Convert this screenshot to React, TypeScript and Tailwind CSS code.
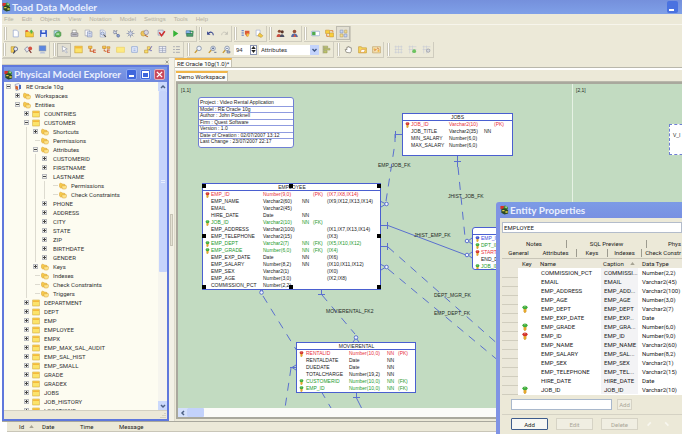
import React, { useState } from "react";

/* ---------- icons ---------- */

const page = <path d="M4 2h6l3 3v9H4z" fill="#fff" stroke="#7c93c8" />;
const yellowBox = (
  <>
    <rect x="1.5" y="2" width="13" height="12" fill="#fbe36b" stroke="#c99b25" />
    <path d="M2 4.5h12" stroke="#f5b93c" strokeWidth="3" />
  </>
);
const lens = <circle cx="9" cy="6" r="4" fill="#eef3fb" stroke="#7d8ba5" strokeWidth="1.4" />;
const handle = <path d="M6 9l-4.5 5" stroke="#c99a35" strokeWidth="2.4" />;

const GLYPHS: Record<string, React.ReactNode> = {
  new: page,
  open: (
    <>
      <path d="M1 4h5l2 2h7v8H1z" fill="#f7cf3d" stroke="#c0912a" />
      <path d="M8 5l3-4 4 4h-2v3h-3V5z" fill="#58b544" />
      <path d="M1 2h4v3H1z" fill="#e2543a" />
    </>
  ),
  save: (
    <>
      <path d="M2 2h12v12H2z" fill="#2f55c8" />
      <path d="M5 2h6v4H5zM4 9h8v5H4z" fill="#e9effc" />
    </>
  ),
  database: (
    <>
      <path d="M2 3h9v10H2z" fill="#b7d8ef" stroke="#4b8a63" />
      <path d="M4 9c3-5 7-5 10-3v6c-3 3-7 3-10 0z" fill="#5fb95a" stroke="#3c7c3a" />
      <path d="M6 9h5" stroke="#fff" strokeWidth="1.5" />
    </>
  ),
  print: (
    <>
      <path d="M4 2h7v5H4z" fill="#fff" stroke="#777" />
      <path d="M2 7h12v6H2z" fill="#c9c7d2" stroke="#6d6b78" />
      <path d="M4 10h8" stroke="#555" />
    </>
  ),
  copy: (
    <>
      <path d="M2 2h8v10H2z" fill="#fff" stroke="#8b8fa5" />
      <path d="M6 5h8v9H6z" fill="#dfe6f7" stroke="#6c7cab" />
      <path d="M8 8h4M8 11h4" stroke="#6c7cab" />
    </>
  ),
  preview: (
    <>
      {page}
      <circle cx="8" cy="8" r="3" fill="#cfdcf4" stroke="#5d6d95" />
      <path d="M10 10l4 4" stroke="#555" strokeWidth="2" />
    </>
  ),
  cut: (
    <>
      <path d="M3 2l8 10M9 2L4 9" stroke="#70778f" strokeWidth="1.6" />
      <circle cx="11" cy="12" r="2.5" fill="#8ea0d0" stroke="#4b5c93" />
      <circle cx="5" cy="6" r="2.5" fill="#d7dbe8" stroke="#6b7390" />
    </>
  ),
  gear: (
    <>
      <path d="M8 1v14M1 8h14M3 3l10 10M13 3L3 13" stroke="#9ba3b5" strokeWidth="1.6" />
      <circle cx="8" cy="8" r="3.4" fill="#cdd5ea" stroke="#77819c" />
    </>
  ),
  gearGold: (
    <>
      <circle cx="6" cy="8" r="4.5" fill="#efc65b" stroke="#b58b32" />
      <circle cx="11" cy="6" r="4" fill="#d9d6df" stroke="#77708c" />
      <path d="M9 11l5 3" stroke="#b76a32" strokeWidth="2" />
    </>
  ),
  check: (
    <>
      <path d="M2 2h9v9H2z" fill="#dfe2ee" stroke="#8088a5" />
      <path d="M4 6l4 6 6-8" fill="none" stroke="#cf2e2e" strokeWidth="2.6" />
    </>
  ),
  play: <path d="M4 2l9 6-9 6z" fill="#36b336" />,
  sync: (
    <>
      <path d="M2 3h8v6H2z" fill="#87b4e8" stroke="#466ea5" />
      <path d="M3 8h11v5H3z" fill="#49a06a" stroke="#286043" />
      <path d="M8 4h6v4" fill="none" stroke="#2c8e53" strokeWidth="2" />
    </>
  ),
  undo: (
    <>
      <path d="M4 8c3-4 9-3 9 3" fill="none" stroke="#31408c" strokeWidth="1.8" />
      <path d="M2 4v6h6z" fill="#31408c" />
    </>
  ),
  redo: (
    <>
      <path d="M12 8c-3-4-9-3-9 3" fill="none" stroke="#c3c1b6" strokeWidth="1.5" />
      <path d="M14 4v6H8z" fill="#c3c1b6" />
    </>
  ),
  listRed: (
    <>
      <path d="M1 3h4M1 7h4M1 11h4" stroke="#4667bd" strokeWidth="1.6" />
      <path d="M7 3h8v6l-4 5-4-5z" fill="#dc5a35" />
      <path d="M10 8h4v5h-4z" fill="#f2c545" />
    </>
  ),
  pageGold: (
    <>
      <path d="M2 2h7v10H2z" fill="#fff" stroke="#8e9fca" />
      <path d="M8 7l6 5-3 3-6-3z" fill="#f2c945" stroke="#b88f2b" />
    </>
  ),
  users: (
    <>
      <circle cx="6" cy="4" r="2.8" fill="#8a4b33" />
      <circle cx="11" cy="5" r="2.8" fill="#5b3528" />
      <path d="M1 14c0-7 8-7 9 0z" fill="#c75143" />
      <path d="M7 14c0-6 7-6 8 0z" fill="#4a5064" />
    </>
  ),
  user: (
    <>
      <circle cx="8" cy="4.5" r="3.2" fill="#9a5238" />
      <path d="M2 14c0-8 11-8 12 0z" fill="#5569a5" />
      <path d="M8 9l3 5H6z" fill="#da5a42" />
    </>
  ),
  toggle: (
    <>
      <rect x="0.5" y="4" width="15" height="8" rx="2" fill="#fff" stroke="#6d8cc9" />
      <rect x="2" y="5" width="6" height="6" fill="#4faa4f" />
    </>
  ),
  boxes: (
    <>
      <path d="M1 2h7v6H1zM8 7h7v7H8z" fill="#f9cf3b" stroke="#c7932a" />
      <path d="M9 3h5v3M3 9v4h4" fill="none" stroke="#dd7c2c" strokeWidth="1.6" />
    </>
  ),
  model: (
    <>
      <path d="M2 2h5v5H2zM9 9h5v5H9z" fill="#c9d5ef" stroke="#7f8eb7" />
      <path d="M10 2h4v5h-4zM2 9h5v5H2z" fill="#f4dc8f" stroke="#b8a05c" />
    </>
  ),
  bookFind: (
    <>
      <path d="M2 3h7v10H2z" fill="#f5cf52" stroke="#b18b31" />
      <circle cx="10" cy="7" r="3.5" fill="#e7e9f3" stroke="#4f587d" strokeWidth="1.4" />
      <path d="M9 10l-3 5" stroke="#31395c" strokeWidth="2" />
    </>
  ),
  bookRed: (
    <>
      <path d="M1 7l5-4 4 5-5 5z" fill="#e5e5ec" stroke="#5c6384" />
      <circle cx="11" cy="6" r="3.4" fill="#d55140" />
      <path d="M9 9l4 5" stroke="#7d2e2a" strokeWidth="2" />
    </>
  ),
  monitor: (
    <>
      <rect x="2" y="1.5" width="12" height="9" fill="#5c86e0" stroke="#7c8dac" />
      <path d="M5 12h6l2 3H3z" fill="#b9c3d9" />
    </>
  ),
  pointer: <path d="M4 2l9 5-4 1 4 5-2 1-4-5-2 3z" fill="#fff" stroke="#8790a9" />,
  entity: yellowBox,
  relation: (
    <>
      <path d="M4 4v7h6" fill="none" stroke="#d0652c" strokeWidth="2" />
      <path d="M1 2h6v4H1z" fill="#f6ce4a" stroke="#c57d2b" />
      <path d="M10 9h4M10 13h4M10 8v6" stroke="#d0502c" strokeWidth="1.6" />
    </>
  ),
  relation2: (
    <>
      <path d="M4 4v7h6" fill="none" stroke="#d0652c" strokeWidth="2" strokeDasharray="3 1" />
      <path d="M1 2h6v4H1zM9 3h5v3H9z" fill="#f6ce4a" stroke="#c57d2b" />
      <path d="M10 9h4M10 13h4M10 8v6" stroke="#d0502c" strokeWidth="1.6" />
    </>
  ),
  note: <path d="M1 4h14v9H1z" fill="#fdea80" stroke="#e8ca5a" />,
  view: (
    <>
      <path d="M3 3h10v10H3z" fill="#e8eefb" stroke="#6a89cf" />
      <path d="M6 7h4M6 10h4" stroke="#6a89cf" />
    </>
  ),
  link: (
    <>
      <path d="M1 9h6v5H1zM6 3h5v5H6z" fill="#f8e06a" stroke="#bd8f39" />
      <path d="M9 10l5-8M11 10h3" stroke="#6a67b5" strokeWidth="1.6" />
    </>
  ),
  grid: (
    <>
      <rect x="2" y="3" width="12" height="10" fill="#eef0f7" stroke="#8c95b2" />
      <path d="M2 6.5h12M2 10h12M8 3v10" stroke="#8c95b2" />
    </>
  ),
  list: <path d="M2 3h3M2 8h3M2 13h3M7 3h7M7 8h7M7 13h7" stroke="#a2a4ad" strokeWidth="1.6" />,
  zoom: (
    <>
      {handle}
      {lens}
    </>
  ),
  zoomIn: (
    <>
      {handle}
      {lens}
      <path d="M7 6h4M9 4v4M11 13h4" stroke="#4a5a85" strokeWidth="1.4" />
    </>
  ),
  zoomOut: (
    <>
      {handle}
      {lens}
      <path d="M7 6h4M9 11h5v3H9z" stroke="#4a5a85" strokeWidth="1.2" fill="#d8dde9" />
    </>
  ),
  align: (
    <>
      <path d="M2 1v14" stroke="#7a7d58" />
      <path d="M3 2h7v3H3zM3 6h11v3H3zM3 10h6v4H3z" fill="#c2c76b" stroke="#91965a" />
    </>
  ),
  hand: (
    <path
      d="M4 13L2 8l2-.5L5 9V4h2V3h2v1h2v1h2v6l-2 3z"
      fill="#fff"
      stroke="#777568"
      strokeWidth="1.2"
    />
  ),
  area: (
    <>
      <path d="M1 3h5l1 2h8v9H1z" fill="#f7d55a" stroke="#c1912f" />
      <path d="M6 8h7l-2 5H4z" fill="#fff" stroke="#d68d3c" />
    </>
  ),
  areaX: (
    <>
      <path d="M1 3h14v11H1z" fill="#f3dfae" stroke="#b99a5b" />
      <path d="M3 6h3v3H3zM10 9h3v3h-3z" fill="#f3b33f" />
      <path d="M9 5l4 3M4 11l4-4" stroke="#cf6c36" strokeWidth="1.6" />
    </>
  ),
  dots: <path d="M1 3h14M1 8h14M1 13h14M3 1v14M8 1v14M13 1v14" stroke="#c5cad6" />,
  dotsGreen: (
    <>
      <path d="M1 3h14M1 8h14M3 1v14M8 1v14" stroke="#c5cad6" />
      <circle cx="11" cy="11" r="3.4" fill="#6cc35e" />
    </>
  ),
  dotsGrey: (
    <>
      <path d="M1 3h14M1 8h14M3 1v14M8 1v14" stroke="#c5cad6" />
      <circle cx="11" cy="10" r="3" fill="#d6d8dd" stroke="#858994" />
    </>
  ),
  folder: (
    <>
      <path d="M1 5c0-3 2-3 4-2l2 1 5 1v6l-8 1c-2 0-3-2-3-4z" fill="#f6c94b" stroke="#d49a2d" />
      <path d="M5 8l9-1c2 0 1 6-1 7H7z" fill="#fde38a" stroke="#d9a236" />
    </>
  ),
  oracle: (
    <>
      <path d="M2 3l7-2 4 3-2 9-7 2z" fill="#e9ecf7" stroke="#6976a6" />
      <path d="M3 5l5 2v7l-5-2z" fill="#d8672f" />
      <path d="M10 4h4v8h-4z" fill="#4a6cc0" />
    </>
  ),
};

function Glyph({ name, className = "size-[9px]" }: { name: string; className?: string }) {
  return (
    <svg viewBox="0 0 16 16" fill="none" className={`${className} block shrink-0`} aria-hidden="true">
      {GLYPHS[name]}
    </svg>
  );
}

function ToadLogo() {
  return (
    <svg viewBox="0 0 20 22" className="h-[10px] w-[9px] shrink-0" aria-hidden="true">
      <path d="M1 2h8v7H1z" fill="#d8302c" />
      <path d="M10 1c5 0 8 3 8 7l-5 3-6-2z" fill="#3f8e3a" />
      <path d="M3 9l8-2 7 4v8l-8 2-7-4z" fill="#2b4a25" />
      <path d="M5 11h5v3H5zM12 14h5v3h-5z" fill="#e8d44a" />
      <path d="M12 3h3v3h-3z" fill="#f6f4c8" />
    </svg>
  );
}

const KEY_TONES = {
  red: "#d3322a",
  green: "#3fae3b",
  blue: "#3b4fd0",
};
type Tone = keyof typeof KEY_TONES;

function KeyIcon({ tone, className }: { tone: Tone; className: string }) {
  return (
    <svg viewBox="0 0 10 14" className={`${className} block shrink-0`} aria-hidden="true">
      <path d="M3 5h4v6l-2 3-2-2z" fill="#f0b02c" stroke="#c0861f" strokeWidth="0.800" />
      <ellipse cx="5" cy="4" rx="4.500" ry="3.300" fill={KEY_TONES[tone]} />
      <path d="M3 3h3" stroke="#fff" strokeOpacity="0.600" />
    </svg>
  );
}

/* ---------- toolbars ---------- */

function ToolButton({ name, pressed }: { name: string; pressed?: boolean }) {
  return (
    <button
      type="button"
      aria-label={name}
      className={`flex h-[14px] w-[14px] shrink-0 items-center justify-center ${
        pressed ? "border border-[#bdbbb0] bg-[#e2dfd2]" : ""
      }`}
    >
      <Glyph name={name} />
    </button>
  );
}

function ToolGroup({ children }: { children: React.ReactNode }) {
  return (
    <div className="flex h-[16px] shrink-0 items-center border-r border-b border-[#cfccbe]">
      <span className="mr-px h-[13px] w-[3px] shrink-0 border-x border-[#cbc8ba] bg-white" />
      {children}
    </div>
  );
}

const Gap = () => <span className="w-[3px] shrink-0" />;

function Toolbars() {
  return (
    <div>
      <div className="flex h-[17px] items-center gap-[2px] pl-[2px]">
        <ToolGroup>
          {["new", "open", "save", "database"].map((n) => (
            <ToolButton key={n} name={n} />
          ))}
          <Gap />
          {["print", "copy", "preview", "cut", "gear", "gearGold"].map((n) => (
            <ToolButton key={n} name={n} />
          ))}
          <Gap />
          {["check", "play", "sync"].map((n) => (
            <ToolButton key={n} name={n} />
          ))}
        </ToolGroup>
        <ToolGroup>
          <ToolButton name="undo" />
          <ToolButton name="redo" />
        </ToolGroup>
        <ToolGroup>
          <ToolButton name="listRed" />
          <ToolButton name="pageGold" />
        </ToolGroup>
        <ToolGroup>
          <ToolButton name="users" />
          <ToolButton name="user" />
        </ToolGroup>
        <ToolGroup>
          <ToolButton name="toggle" />
          <ToolButton name="boxes" />
          <ToolButton name="model" pressed />
        </ToolGroup>
      </div>
      <div className="flex h-[16px] items-center gap-[3px] pl-px">
        <ToolGroup>
          {["bookFind", "bookRed", "monitor"].map((n) => (
            <ToolButton key={n} name={n} />
          ))}
        </ToolGroup>
        <ToolGroup>
          <ToolButton name="pointer" pressed />
          {["entity", "relation", "relation2", "note", "view", "link", "grid", "list"].map((n) => (
            <ToolButton key={n} name={n} />
          ))}
        </ToolGroup>
        <ToolGroup>
          <ToolButton name="zoom" />
          <ToolButton name="zoomIn" />
          <ToolButton name="zoomOut" />
          <input
            aria-label="Zoom"
            defaultValue="94"
            className="ml-px h-[10px] w-[16px] bg-white pl-[2px] text-[6px] text-[#333]"
          />
          <div className="mr-[2px] flex h-[10px] w-[7px] flex-col border border-[#8a95b5] bg-white text-[#222]">
            <button type="button" aria-label="Zoom up" className="flex flex-1 items-center justify-center">
              <svg viewBox="0 0 6 4" className="h-[3px] w-[5px]"><path d="M3 0l3 4H0z" fill="currentColor" /></svg>
            </button>
            <button type="button" aria-label="Zoom down" className="flex flex-1 items-center justify-center">
              <svg viewBox="0 0 6 4" className="h-[3px] w-[5px]"><path d="M3 4l3-4H0z" fill="currentColor" /></svg>
            </button>
          </div>
          <div className="relative h-[10px] w-[60px]">
            <select
              aria-label="Display level"
              className="block h-full w-full appearance-none bg-white pl-[2px] font-['Roboto',sans-serif] text-[6px] leading-[10px] text-[#333]"
            >
              <option>Attributes</option>
            </select>
            <svg viewBox="0 0 9 10" className="pointer-events-none absolute top-0 right-0 h-[10px] w-[9px]">
              <rect width="9" height="10" fill="#c3d3fb" />
              <path d="M2.500 4l2 2 2-2" fill="none" stroke="#3f5583" strokeWidth="1.400" />
            </svg>
          </div>
          <ToolButton name="align" />
        </ToolGroup>
        <ToolGroup>
          {["hand", "area", "areaX"].map((n) => (
            <ToolButton key={n} name={n} />
          ))}
        </ToolGroup>
        <ToolGroup>
          {["dots", "dotsGreen", "dotsGrey"].map((n) => (
            <ToolButton key={n} name={n} />
          ))}
        </ToolGroup>
      </div>
    </div>
  );
}

/* ---------- model explorer ---------- */

type Node = { level: number; label: string; icon?: string; box?: "+" | "-" };

const entity = (label: string): Node => ({ level: 2, label, icon: "entity", box: "+" });
const attribute = (label: string, box: "+" | "-" = "+"): Node => ({ level: 4, label, box });

const TREE: Node[] = [
  { level: 0, label: "RE Oracle 10g", icon: "oracle", box: "-" },
  { level: 1, label: "Workspaces", icon: "folder", box: "+" },
  { level: 1, label: "Entities", icon: "folder", box: "-" },
  entity("COUNTRIES"),
  { level: 2, label: "CUSTOMER", icon: "entity", box: "-" },
  { level: 3, label: "Shortcuts", icon: "folder", box: "+" },
  { level: 3, label: "Permissions", icon: "folder" },
  { level: 3, label: "Attributes", icon: "folder", box: "-" },
  attribute("CUSTOMERID"),
  attribute("FIRSTNAME"),
  attribute("LASTNAME", "-"),
  { level: 5, label: "Permissions", icon: "folder" },
  { level: 5, label: "Check Constraints", icon: "folder" },
  attribute("PHONE"),
  attribute("ADDRESS"),
  attribute("CITY"),
  attribute("STATE"),
  attribute("ZIP"),
  attribute("BIRTHDATE"),
  attribute("GENDER"),
  { level: 3, label: "Keys", icon: "folder", box: "+" },
  { level: 3, label: "Indexes", icon: "folder" },
  { level: 3, label: "Check Constraints", icon: "folder" },
  { level: 3, label: "Triggers", icon: "folder" },
  entity("DEPARTMENT"),
  entity("DEPT"),
  entity("EMP"),
  entity("EMPLOYEE"),
  entity("EMPX"),
  entity("EMP_MAX_SAL_AUDIT"),
  entity("EMP_SAL_HIST"),
  entity("EMP_SMALL"),
  entity("GRADE"),
  entity("GRADEX"),
  entity("JOBS"),
  entity("JOB_HISTORY"),
  entity("LOCATIONS"),
];

/* Vertical guide lines drawn to the left of a row, one per open ancestor. */
function guides(index: number) {
  const node = TREE[index];
  return Array.from({ length: node.level }, (_, level) => {
    for (let i = index + 1; i < TREE.length; i++) {
      if (TREE[i].level < level) return false;
      if (TREE[i].level === level) return true;
    }
    return false;
  });
}

function TreeRow({ index }: { index: number }) {
  const node = TREE[index];
  return (
    <li className="flex h-[9px] items-center whitespace-nowrap">
      {guides(index).map((on, i) => (
        <span key={i} className="flex h-full w-[9px] shrink-0 justify-center">
          {on && <span className="w-px bg-[#dddbd0]" />}
        </span>
      ))}
      <span className="flex h-full w-[9px] shrink-0 items-center justify-center">
        {node.box ? (
          <svg viewBox="0 0 5 5" className="size-[5px]" aria-hidden="true">
            <rect x="0" y="0" width="5" height="5" fill="#b9bbc0" />
            <rect x="1" y="1" width="3" height="3" fill="#f4f3ea" />
            <path d={node.box === "+" ? "M1 2.500h3M2.500 1v3" : "M1 2.500h3"} stroke="#444" />
          </svg>
        ) : (
          <span className="ml-[4px] h-px w-full bg-[#dddbd0]" />
        )}
      </span>
      {node.icon ? (
        <span className="ml-px flex w-[12px] shrink-0">
          <Glyph name={node.icon} className="size-[8px]" />
        </span>
      ) : (
        <span className="w-[4px] shrink-0" />
      )}
      <span className="leading-[9px]">{node.label}</span>
    </li>
  );
}

function Chevron({ d }: { d: string }) {
  return (
    <svg viewBox="0 0 8 8" className="size-[8px]" aria-hidden="true">
      <path d={d} fill="none" stroke="#4d6185" strokeWidth="1.500" />
    </svg>
  );
}

function ModelExplorer() {
  return (
    <section className="flex min-h-0 flex-1 flex-col border-2 border-[#5f78dc] bg-[#ece9d8] font-['Roboto',sans-serif] text-[6px]">
      <header className="flex h-[15px] shrink-0 items-center gap-px bg-linear-to-b from-[#7c9be6] to-[#6f87dd] pr-[2px]">
        <ToadLogo />
        <h2 className="flex-1 whitespace-nowrap font-['Lato',sans-serif] text-[10px] leading-[15px] font-bold text-[#e9effd]">
          Physical Model Explorer
        </h2>
        <div className="flex gap-[3px]">
          <button type="button" aria-label="Minimize" className="flex h-[11px] w-[11px] items-end rounded-[2px] border border-[#8ea8f0] bg-[#3f66dc] p-[2px]">
            <span className="h-[2px] w-[5px] bg-white" />
          </button>
          <button type="button" aria-label="Maximize" className="flex h-[11px] w-[11px] items-center justify-center rounded-[2px] border border-[#8ea8f0] bg-[#3f66dc]">
            <span className="h-[7px] w-[7px] border border-t-2 border-white" />
          </button>
          <button type="button" aria-label="Close" className="flex h-[11px] w-[11px] items-center justify-center rounded-[2px] border border-[#e3b0b8] bg-[#c9475a]">
            <svg viewBox="0 0 8 8" className="size-[7px]"><path d="M1 1l6 6M7 1L1 7" stroke="#fff" strokeWidth="1.600" /></svg>
          </button>
        </div>
      </header>
      <div className="flex min-h-0 flex-1 bg-[#fdfcf1]">
        <ul className="min-w-0 flex-1 overflow-hidden text-[#333]">
          {TREE.map((_, i) => (
            <TreeRow key={i} index={i} />
          ))}
        </ul>
        <div className="flex w-[9px] shrink-0 flex-col items-center bg-[#f6f5ee]">
          <button type="button" aria-label="Scroll up" className="flex h-[9px] w-full items-center justify-center bg-[#cbd9fc]">
            <Chevron d="M2 5l2-2 2 2" />
          </button>
          <div className="flex h-[181px] w-[8px] flex-col items-center justify-center gap-px rounded-[1px] bg-[#c6d4fb]">
            <span className="h-px w-[4px] bg-[#e8effe]" />
            <span className="h-px w-[4px] bg-[#e8effe]" />
          </div>
          <button type="button" aria-label="Scroll down" className="mt-auto flex h-[9px] w-full items-center justify-center bg-[#cbd9fc]">
            <Chevron d="M2 3l2 2 2-2" />
          </button>
        </div>
      </div>
      <footer className="flex h-[9px] shrink-0 items-end justify-end border-t border-[#d3d0c1] p-px">
        <svg viewBox="0 0 6 6" className="size-[6px]" aria-hidden="true">
          <path d="M5 1v1M5 3v1M3 3v1M5 5v1M3 5v1M1 5v1" stroke="#bdbaa9" />
        </svg>
      </footer>
    </section>
  );
}

/* ---------- diagram ---------- */

type Row = { name: string; type: string; nn?: string; key?: string; index?: string; tone?: Tone };

const TEXT_TONES = {
  red: "text-[#e8303c]",
  green: "text-[#259a2c]",
  blue: "text-[#3f4be0]",
};

const EMPLOYEE: Row[] = [
  { name: "EMP_ID", type: "Number(9,0)", key: "(PK)", index: "(IX7,IX8,IX14)", tone: "red" },
  { name: "EMP_NAME", type: "Varchar2(60)", nn: "NN", index: "(IX9,IX12,IX13,IX14)" },
  { name: "EMAIL", type: "Varchar2(45)" },
  { name: "HIRE_DATE", type: "Date", nn: "NN" },
  { name: "JOB_ID", type: "Varchar2(10)", nn: "NN", key: "(FK)", tone: "green" },
  { name: "EMP_ADDRESS", type: "Varchar2(100)", index: "(IX1,IX7,IX13,IX14)" },
  { name: "EMP_TELEPHONE", type: "Varchar2(15)", index: "(IX3)" },
  { name: "EMP_DEPT", type: "Varchar2(7)", nn: "NN", key: "(FK)", index: "(IX5,IX10,IX12)", tone: "green" },
  { name: "EMP_GRADE", type: "Number(6,0)", nn: "NN", key: "(FK)", index: "(IX4)", tone: "green" },
  { name: "EMP_EXP_DATE", type: "Date", nn: "NN", index: "(IX6)" },
  { name: "EMP_SALARY", type: "Number(8,2)", nn: "NN", index: "(IX10,IX11,IX12)" },
  { name: "EMP_SEX", type: "Varchar2(1)", index: "(IX0)" },
  { name: "EMP_AGE", type: "Number(3,0)", index: "(IX2,IX8)" },
  { name: "COMMISSION_PCT", type: "Number(2,2)" },
];

const JOBS: Row[] = [
  { name: "JOB_ID", type: "Varchar2(10)", key: "(PK)", tone: "red" },
  { name: "JOB_TITLE", type: "Varchar2(35)", nn: "NN" },
  { name: "MIN_SALARY", type: "Number(6,0)" },
  { name: "MAX_SALARY", type: "Number(6,0)" },
];

const MOVIERENTAL: Row[] = [
  { name: "RENTALID", type: "Number(10,0)", nn: "NN", key: "(PK)", tone: "red" },
  { name: "RENTALDATE", type: "Date", nn: "NN" },
  { name: "DUEDATE", type: "Date", nn: "NN" },
  { name: "TOTALCHARGE", type: "Number(19,2)", nn: "NN" },
  { name: "CUSTOMERID", type: "Number(10,0)", nn: "NN", key: "(FK)", tone: "green" },
  { name: "EMP_ID", type: "Number(10,0)", nn: "NN", key: "(FK)", tone: "green" },
];

const JOB_HISTORY: Row[] = [
  { name: "EMP_ID", type: "", tone: "blue" },
  { name: "DPT_ID", type: "", tone: "green" },
  { name: "START_DATE", type: "", tone: "red" },
  { name: "END_DATE", type: "" },
  { name: "JOB_ID", type: "", tone: "green" },
];

function EntityBox({
  title,
  rows,
  columns,
  className,
}: {
  title: string;
  rows: Row[];
  columns: string[];
  className: string;
}) {
  return (
    <div className={`absolute overflow-hidden border border-[#4a5fd0] bg-white ${className}`}>
      <table className="w-full table-fixed border-collapse leading-[7px] whitespace-nowrap">
        <caption className="h-[7px] border-b border-[#4a5fd0] text-center leading-[6px] text-[#222]">{title}</caption>
        <colgroup>
          {columns.map((c, i) => (
            <col key={i} className={c} />
          ))}
        </colgroup>
        <tbody>
          {rows.map((r) => (
            <tr key={r.name} className={`h-[7px] ${r.tone ? TEXT_TONES[r.tone] : "text-[#222]"}`}>
              <td className="p-0 pl-[2px]">{r.tone && <KeyIcon tone={r.tone} className="h-[6px] w-[5px]" />}</td>
              <td className="p-0">{r.name}</td>
              <td className="p-0">{r.type}</td>
              <td className="p-0">{r.nn}</td>
              <td className="p-0">{r.key}</td>
              <td className="p-0">{r.index}</td>
            </tr>
          ))}
        </tbody>
      </table>
    </div>
  );
}

const INFO = [
  "Project : Video Rental Application",
  "Model : RE Oracle 10g",
  "Author : John Pocknell",
  "Firm : Quest Software",
  "Version : 1.0",
  "Date of Creation : 02/07/2007 13:12",
  "Last Change : 23/07/2007 22:17",
];

const LABELS = [
  { text: "[1,1]", at: "left-[3px] top-[3px]" },
  { text: "[2,1]", at: "left-[398px] top-[3px]" },
  { text: "EMP_JOB_FK", at: "left-[200px] top-[78px]" },
  { text: "JHIST_JOB_FK", at: "left-[270px] top-[109px]" },
  { text: "JHIST_EMP_FK", at: "left-[236px] top-[148px]" },
  { text: "DEPT_MGR_FK", at: "left-[256px] top-[208px]" },
  { text: "EMP_DEPT_FK", at: "left-[256px] top-[226px]" },
  { text: "MOVIERENTAL_FK2", at: "left-[148px] top-[224px]" },
];

const HANDLES = [
  "left-[24px] top-[100px]",
  "left-[111px] top-[100px]",
  "left-[199px] top-[100px]",
  "left-[24px] top-[150px]",
  "left-[199px] top-[150px]",
  "left-[24px] top-[201px]",
  "left-[111px] top-[201px]",
  "left-[199px] top-[201px]",
];

function Connectors() {
  return (
    <svg className="absolute inset-0 h-full w-full" fill="none" stroke="#5a70cf" aria-hidden="true">
      <path d="M394.500 0v400" stroke="#e6f2e4" />
      <g strokeDasharray="8 7">
        <path d="M217 50v9l-9 58" />
        <path d="M280 83l7 70" />
        <path d="M210 163L322 262" />
        <path d="M210 185L322 278" />
        <path d="M144 211l33 39" />
        <path d="M85 212l34 55" />
        <path d="M113 284l-6 40" />
        <path d="M143 307l10 17" />
      </g>
      <g>
        <path d="M224 50.500h-7M217.500 47v7" />
        <path d="M279.500 71v12M276 77.500h7" />
        <path d="M203 141.500h7L288 171M209.500 138v7" />
        <path d="M203 162.500h7M209.500 159v7" />
        <path d="M143.500 204v7M140 210.500h7" />
        <path d="M178.500 307v7l5 10M175 313.500h7" />
        <path d="M203 117.500l5 2.500-5 3M203 180.500l5 2.500-5 3" />
        <path d="M294 154l-4 3 4 3M294 168l-4 3 4 3" />
        <path d="M81 204l2.500 4 2.500-4M175 258l3-4 3 4" />
        <path d="M118 281l-4 2.500 4 2.500M118 283.500h-6" />
      </g>
      <g fill="#eef4ff">
        <circle cx="208.500" cy="120" r="1.800" />
        <circle cx="208.500" cy="183" r="1.800" />
        <circle cx="289" cy="157" r="1.800" />
        <circle cx="289" cy="171" r="1.800" />
        <circle cx="83.500" cy="208.500" r="1.800" />
        <circle cx="178" cy="253.500" r="1.800" />
      </g>
    </svg>
  );
}

function Diagram() {
  return (
    <div className="relative min-h-0 flex-1 overflow-hidden bg-[#c2dbc1] font-['Liberation_Sans',Arial,sans-serif] text-[5px] text-[#1f2a1f]">
      <Connectors />
      <div className="absolute top-[13px] left-[20px] flex h-[51px] w-[96px] flex-col rounded-[3px] border border-[#6f7fd4] bg-white pt-[2px] pb-[2px] text-[#222]">
        {INFO.map((line, i) => (
          <p
            key={line}
            className={`min-h-0 flex-1 pl-px leading-[5px] whitespace-nowrap ${
              i < INFO.length - 1 ? "border-b border-[#8f9be0]" : ""
            }`}
          >
            {line}
          </p>
        ))}
      </div>
      <EntityBox
        title="JOBS"
        rows={JOBS}
        columns={["w-[8px]", "w-[38px]", "w-[35px]", "w-[10px]", "w-[18px]", "w-0"]}
        className="top-[29px] left-[224px] h-[43px] w-[111px]"
      />
      <EntityBox
        title=""
        rows={JOB_HISTORY}
        columns={["w-[8px]", "w-[50px]", "w-[30px]", "w-[10px]", "w-[10px]", "w-0"]}
        className="top-[143px] left-[294px] h-[43px] w-[110px] rounded-[3px]"
      />
      <EntityBox
        title="EMPLOYEE"
        rows={EMPLOYEE}
        columns={["w-[8px]", "w-[52px]", "w-[39px]", "w-[11px]", "w-[14px]", "w-[54px]"]}
        className="top-[99px] left-[24px] h-[107px] w-[179px]"
      />
      <EntityBox
        title="MOVIERENTAL"
        rows={MOVIERENTAL}
        columns={["w-[9px]", "w-[43px]", "w-[38px]", "w-[11px]", "w-[18px]", "w-0"]}
        className="top-[258px] left-[118px] h-[51px] w-[120px]"
      />
      <div className="absolute top-[40px] left-[491px] h-[31px] w-[40px] border border-dashed border-[#6f7fd4] bg-white pt-[7px] pl-[3px]">
        V_I
      </div>
      {LABELS.map((l) => (
        <span key={l.text} className={`absolute leading-[7px] ${l.at}`}>
          {l.text}
        </span>
      ))}
      {HANDLES.map((h) => (
        <span key={h} className={`absolute size-[4px] bg-black ${h}`} />
      ))}
    </div>
  );
}

function SheetTab({ label }: { label: string }) {
  return (
    <button
      type="button"
      className="border-t-2 border-r border-[#f0b548] border-r-[#c5c2b4] bg-[#fdfdfa] px-[2px] font-['Roboto',sans-serif] text-[6px] leading-[8px] whitespace-nowrap"
    >
      {label}
    </button>
  );
}

function Workspace() {
  return (
    <main className="flex min-w-0 flex-1 flex-col">
      <div className="flex h-[10px] shrink-0 border-b border-[#b9b7ab]">
        <SheetTab label="RE Oracle 10g(1.0)*" />
      </div>
      <div className="h-[2px] shrink-0 bg-white" />
      <div className="ml-px flex h-[12px] shrink-0 border-b border-[#b9b7ab] pt-px">
        <SheetTab label="Demo Workspace" />
      </div>
      <div className="mb-[2px] ml-px flex min-h-0 flex-1 flex-col border-t-2 border-b-2 border-l-2 border-[#a9a89d] bg-white">
        <Diagram />
        <div className="flex h-[9px] shrink-0 bg-[#fbfbf8]">
          <button type="button" aria-label="Scroll left" className="flex w-[9px] items-center justify-center bg-[#d4e0fc]">
            <Chevron d="M5 2L3 4l2 2" />
          </button>
          <span className="w-[17px] rounded-[1px] bg-[#c3d2fb]" />
        </div>
      </div>
    </main>
  );
}

/* ---------- entity properties ---------- */

type Attribute = { name: string; caption: string; type: string; icon?: Tone };

const ATTRIBUTES: Attribute[] = [
  { name: "COMMISSION_PCT", caption: "COMMISSI...", type: "Number(2,2)" },
  { name: "EMAIL", caption: "EMAIL", type: "Varchar2(45)" },
  { name: "EMP_ADDRESS", caption: "EMP_ADD...", type: "Varchar2(100)" },
  { name: "EMP_AGE", caption: "EMP_AGE", type: "Number(3,0)" },
  { name: "EMP_DEPT", caption: "EMP_DEPT", type: "Varchar2(7)", icon: "green" },
  { name: "EMP_EXP_DATE", caption: "EMP_EXP...", type: "Date" },
  { name: "EMP_GRADE", caption: "EMP_GRA...", type: "Number(6,0)", icon: "green" },
  { name: "EMP_ID", caption: "EMP_ID", type: "Number(9,0)", icon: "red" },
  { name: "EMP_NAME", caption: "EMP_NAME", type: "Varchar2(60)" },
  { name: "EMP_SALARY", caption: "EMP_SAL...", type: "Number(8,2)" },
  { name: "EMP_SEX", caption: "EMP_SEX", type: "Varchar2(1)" },
  { name: "EMP_TELEPHONE", caption: "EMP_TEL...", type: "Varchar2(15)" },
  { name: "HIRE_DATE", caption: "HIRE_DATE", type: "Date" },
  { name: "JOB_ID", caption: "JOB_ID", type: "Varchar2(10)", icon: "green" },
];

function Tab({ label, className }: { label: string; className: string }) {
  return (
    <button type="button" className={`h-[8px] shrink-0 leading-[8px] whitespace-nowrap ${className}`}>
      {label}
    </button>
  );
}

function EntityProperties() {
  const [name, setName] = useState("EMPLOYEE");
  return (
    <section className="absolute top-[202px] right-0 bottom-0 left-[494px] flex flex-col overflow-hidden rounded-tl-[3px] border-l-[4px] border-[#8093e4] bg-[#ece9d8] font-['Roboto',sans-serif] text-[6px] text-[#222]">
      <header className="flex h-[16px] shrink-0 items-center gap-px bg-linear-to-b from-[#7c9be6] to-[#7890e2]">
        <ToadLogo />
        <h2 className="font-['Lato',sans-serif] text-[10px] leading-[16px] font-bold whitespace-nowrap text-[#e9effd]">
          Entity Properties
        </h2>
      </header>
      <input
        aria-label="Entity name"
        value={name}
        onChange={(e) => setName(e.target.value)}
        className="mt-[4px] ml-[2px] h-[11px] shrink-0 border border-[#b3bccb] bg-white pl-px text-[6px]"
      />
      <div className="mt-[7px] ml-[2px] flex shrink-0 pb-px">
        <Tab label="Notes" className="w-[65px] border-r border-[#9d9b8f]" />
        <Tab label="SQL Preview" className="w-[80px] border-r border-[#9d9b8f]" />
        <Tab label="Phys" className="flex-1 pr-px text-right" />
      </div>
      <div className="ml-[2px] flex shrink-0 pb-px">
        <Tab label="General" className="w-[33px]" />
        <Tab label="Attributes" className="w-[42px] border-r border-[#9d9b8f]" />
        <Tab label="Keys" className="w-[31px] border-r border-[#9d9b8f]" />
        <Tab label="Indexes" className="w-[34px] border-r border-[#9d9b8f]" />
        <Tab label="Check Constr" className="flex-1 pr-px text-right" />
      </div>
      <table className="ml-[2px] w-[210px] shrink-0 table-fixed border-collapse bg-white leading-[9px] whitespace-nowrap">
        <colgroup>
          <col className="w-[16px]" />
          <col className="w-[22px]" />
          <col className="w-[61px]" />
          <col className="w-[37px]" />
          <col />
        </colgroup>
        <thead>
          <tr className="h-[9px] border-t border-[#c9c6b8] bg-[#ebe8da] text-left">
            <th className="p-0 font-normal" />
            <th className="p-0 pl-[4px] font-normal">Key</th>
            <th className="p-0 font-normal">Name</th>
            <th className="p-0 pl-[2px] font-normal">
              <span className="flex items-center gap-[6px]">
                Caption
                <svg viewBox="0 0 6 4" className="h-[3px] w-[5px]" aria-hidden="true">
                  <path d="M3 0l3 4H0z" fill="#a5a293" />
                </svg>
              </span>
            </th>
            <th className="p-0 pl-[4px] font-normal">Data Type</th>
          </tr>
        </thead>
        <tbody>
          {ATTRIBUTES.map((a) => (
            <tr key={a.name} className="h-[9px]">
              <td className="border-b border-[#d0cdbe] bg-[#ebe8da] p-0" />
              <td className="p-0 pl-[4px]">{a.icon && <KeyIcon tone={a.icon} className="h-[8px] w-[6px]" />}</td>
              <td className="p-0 pl-px">{a.name}</td>
              <td className="bg-[#f3f3f5] p-0 pl-[3px]">{a.caption}</td>
              <td className="p-0 pl-[4px]">{a.type}</td>
            </tr>
          ))}
        </tbody>
      </table>
      <div className="ml-[2px] flex h-[20px] shrink-0 items-center gap-[5px] border-b border-[#d5d2c4] pl-[9px]">
        <input aria-label="New attribute" className="h-[11px] w-[101px] border border-[#a9b8cc] bg-white px-px" />
        <button type="button" disabled className="h-[11px] w-[15px] border border-[#d6d3c5] bg-[#f0eee2] text-[#aaa798]">
          Add
        </button>
      </div>
      <div className="ml-[2px] flex flex-1 shrink-0 items-center gap-[8px] pl-[9px]">
        <button type="button" className="h-[12px] w-[37px] rounded-[1px] border border-[#3e5c8c] bg-[#f7f7f3]">
          Add
        </button>
        <button type="button" disabled className="h-[12px] w-[37px] border border-[#d6d3c5] bg-[#f0eee2] text-[#aaa798]">
          Edit
        </button>
        <button type="button" disabled className="h-[12px] w-[37px] border border-[#d6d3c5] bg-[#f0eee2] text-[#aaa798]">
          Delete
        </button>
        <svg viewBox="0 0 30 10" className="h-[8px] w-[24px]" fill="none" stroke="#f8f7f0" aria-hidden="true">
          <path d="M2 7l4-4M24 3l4 4" strokeWidth="2" />
        </svg>
      </div>
    </section>
  );
}

/* ---------- application ---------- */

const MENU = ["File", "Edit", "Objects", "View", "Notation", "Model", "Settings", "Tools", "Help"];

export default function App() {
  return (
    <div className="h-screen overflow-hidden bg-white px-[2px] font-['Liberation_Sans',Arial,sans-serif] text-[6px] text-[#222]">
      <div className="relative flex h-full flex-col overflow-hidden bg-[#ece9d8]">
        <header className="flex h-[14px] shrink-0 items-center gap-px bg-linear-to-b from-[#7590dc] to-[#7fa0e8]">
          <ToadLogo />
          <h1 className="flex-1 font-['Lato',sans-serif] text-[10px] leading-[14px] font-bold whitespace-nowrap text-[#e9effd]">
            Toad Data Modeler
          </h1>
          <button type="button" aria-label="Minimize window" className="mr-[4px] flex h-[12px] w-[11px] items-end rounded-[2px] bg-[#4a72e0] p-[2px]">
            <span className="h-[2px] w-[5px] bg-white" />
          </button>
        </header>
        <nav className="flex h-[11px] shrink-0 items-center gap-[8px] border-b border-[#f7f5ec] pl-[2px] text-[#b3b0a2]">
          {MENU.map((m) => (
            <button key={m} type="button" className="leading-[10px]">
              {m}
            </button>
          ))}
        </nav>
        <Toolbars />
        <div className="flex min-h-0 flex-1">
          <aside className="flex w-[167px] shrink-0 flex-col">
            <div className="flex h-[7px] shrink-0 items-center justify-end border-y border-[#cfccbe] text-[#77756a]">
              <button type="button" aria-label="Close panel" className="flex size-[5px] items-center justify-center">
                <svg viewBox="0 0 6 6" className="size-[4px]"><path d="M1 1l4 4M5 1L1 5" stroke="currentColor" /></svg>
              </button>
            </div>
            <ModelExplorer />
          </aside>
          <div className="flex w-[6px] shrink-0 items-center justify-center border-r border-[#dedbcd] bg-[#f3f1e6]">
            <span className="mb-[20px] h-[32px] w-[3px] border border-[#c7c4b6] bg-[#e6e3d5]" />
          </div>
          <Workspace />
        </div>
        <footer className="h-[13px] shrink-0 border-t border-[#a9a89d] bg-white pl-[5px]">
          <table className="w-full table-fixed border-collapse font-['Roboto',sans-serif]">
            <thead>
              <tr className="h-[9px] border-b border-[#c9c6b8] bg-[#ece9d8] text-left leading-[9px]">
                <th className="w-[35px] p-0 pl-[12px] font-normal">
                  <span className="flex items-center gap-[5px]">
                    Id
                    <svg viewBox="0 0 6 4" className="h-[3px] w-[5px]" aria-hidden="true">
                      <path d="M3 0l3 4H0z" fill="#a5a293" />
                    </svg>
                  </span>
                </th>
                <th className="w-[38px] p-0 font-normal">Date</th>
                <th className="w-[39px] p-0 font-normal">Time</th>
                <th className="p-0 font-normal">Message</th>
              </tr>
            </thead>
          </table>
        </footer>
        <EntityProperties />
      </div>
    </div>
  );
}
